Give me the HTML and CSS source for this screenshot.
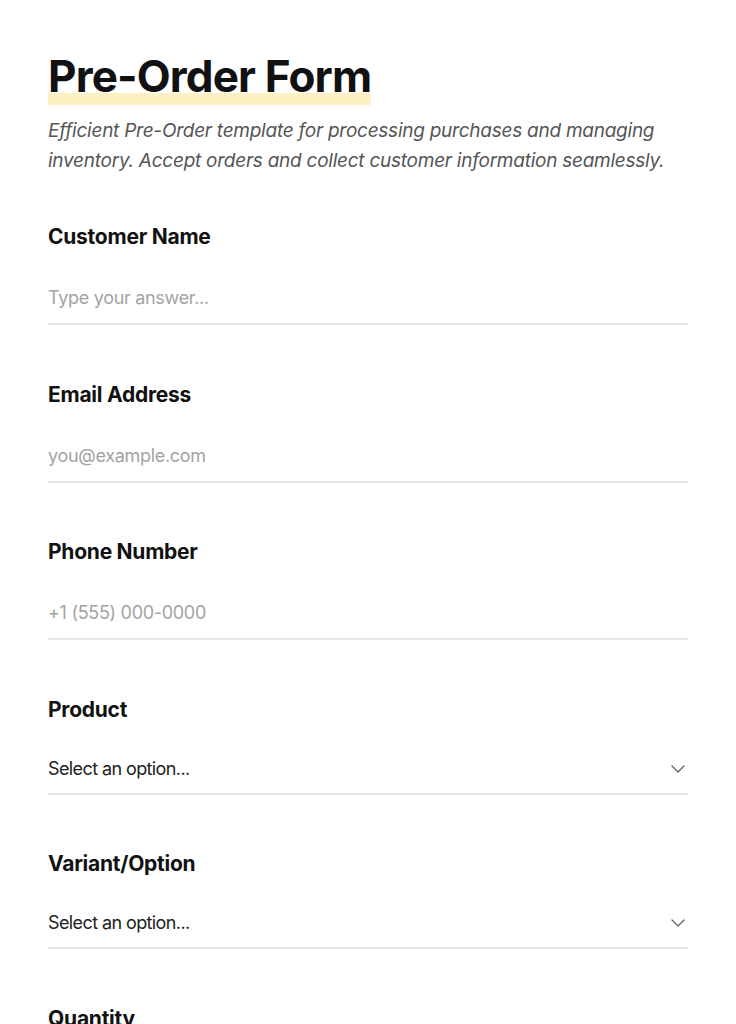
FILE: index.html
```html
<!DOCTYPE html>
<html lang="en">
<head>
<meta charset="utf-8">
<title>Pre-Order Form</title>
<link rel="stylesheet" href="styles.css">
</head>
<body>
<main class="page">
  <header class="intro">
    <h1 class="title"><span class="title-mark">Pre-Order Form</span></h1>
    <p class="desc">Efficient Pre-Order template for processing purchases and managing inventory. Accept orders and collect customer information seamlessly.</p>
  </header>
  <form class="form">
    <div class="field">
      <label class="label" for="name">Customer Name</label>
      <input class="input" id="name" type="text" placeholder="Type your answer...">
    </div>
    <div class="field">
      <label class="label" for="email">Email Address</label>
      <input class="input" id="email" type="email" placeholder="you@example.com">
    </div>
    <div class="field">
      <label class="label" for="phone">Phone Number</label>
      <input class="input" id="phone" type="tel" placeholder="+1 (555) 000-0000">
    </div>
    <div class="field">
      <label class="label" for="product">Product</label>
      <div class="select-wrap">
        <select class="select" id="product"><option>Select an option...</option></select>
        <svg class="chev" width="14" height="8" viewBox="0 0 14 8"><path d="M1 1l6 6 6-6" fill="none" stroke="#666" stroke-width="1.4" stroke-linecap="round" stroke-linejoin="round"/></svg>
      </div>
    </div>
    <div class="field">
      <label class="label" for="variant">Variant/Option</label>
      <div class="select-wrap">
        <select class="select" id="variant"><option>Select an option...</option></select>
        <svg class="chev" width="14" height="8" viewBox="0 0 14 8"><path d="M1 1l6 6 6-6" fill="none" stroke="#666" stroke-width="1.4" stroke-linecap="round" stroke-linejoin="round"/></svg>
      </div>
    </div>
    <div class="field">
      <label class="label" for="qty">Quantity</label>
      <input class="input" id="qty" type="number" placeholder="0">
    </div>
  </form>
</main>
</body>
</html>
```
FILE: styles.css
```css
* { box-sizing: border-box; }
html, body { margin: 0; padding: 0; background: #fff; }
body { font-family: Inter, "Open Sans", sans-serif; color: #111; }
.page { padding: 48px 48px 40px; }
.intro { margin-bottom: 47px; }
.title { margin: 0; font-size: 44px; line-height: 57px; font-weight: 700; letter-spacing: -0.85px; }
.title-mark { display: inline-block; background: linear-gradient(to bottom, transparent calc(100% - 12px), #fdf0c3 0); }
.desc { margin: 11px 0 0; font-size: 19px; line-height: 30px; font-style: italic; color: #555; letter-spacing: -0.25px; }
.form { display: flex; flex-direction: column; gap: 55.5px; }
.field { display: flex; flex-direction: column; gap: 22px; }
.label { font-size: 21px; line-height: 28px; font-weight: 700; color: #111; letter-spacing: -0.25px; }
.input { font: inherit; font-size: 18px; line-height: 24px; padding: 13px 0; border: 0; border-bottom: 2px solid #e6e6e6; outline: none; background: transparent; color: #222; width: 100%; letter-spacing: -0.3px; }
.input::placeholder { color: #a3a3a3; }
.select-wrap { display: flex; align-items: center; border-bottom: 2px solid #e6e6e6; padding: 11px 3px 12px 0; }
.select { flex: 1; font: inherit; font-size: 18px; line-height: 24px; height: 24px; border: 0; padding: 0; margin: 0; appearance: none; -webkit-appearance: none; background: transparent; color: #222; outline: none; letter-spacing: -0.6px; }
.chev { flex: none; }
```
